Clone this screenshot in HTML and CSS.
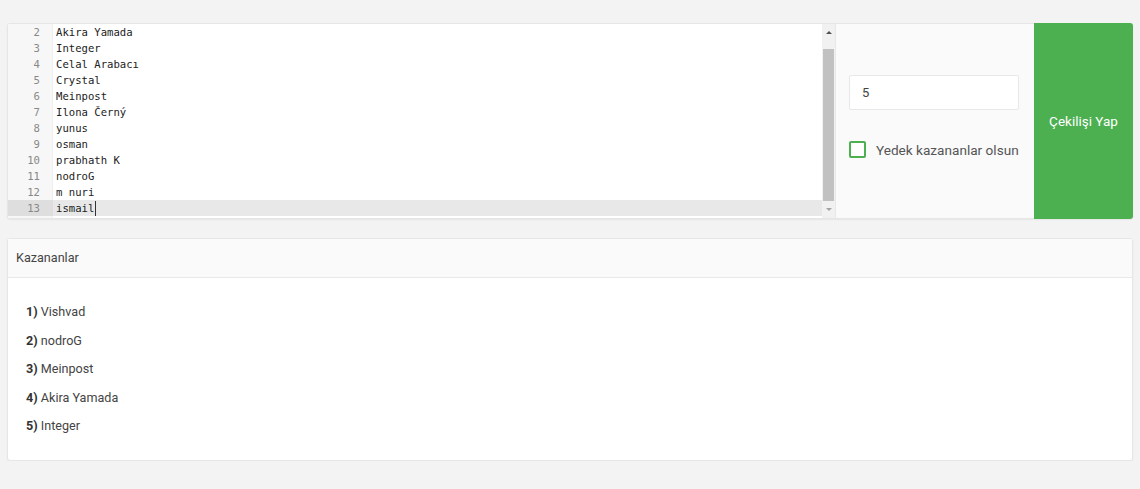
FILE: index.html
```html
<!DOCTYPE html>
<html lang="tr">
<head>
    <meta charset="UTF-8">
    <meta name="viewport" content="width=device-width, initial-scale=1.0">
    <title>Çekiliş</title>
    <link rel="stylesheet" href="styles.css">
</head>
<body>

<div class="page">
    <div class="card draw-card">
        <div class="editor">
            <div class="editor-lines">
                <div class="line"><span class="num">2</span><span class="code">Akira Yamada</span></div>
                <div class="line"><span class="num">3</span><span class="code">Integer</span></div>
                <div class="line"><span class="num">4</span><span class="code">Celal Arabacı</span></div>
                <div class="line"><span class="num">5</span><span class="code">Crystal</span></div>
                <div class="line"><span class="num">6</span><span class="code">Meinpost</span></div>
                <div class="line"><span class="num">7</span><span class="code">Ilona Černý</span></div>
                <div class="line"><span class="num">8</span><span class="code">yunus</span></div>
                <div class="line"><span class="num">9</span><span class="code">osman</span></div>
                <div class="line"><span class="num">10</span><span class="code">prabhath K</span></div>
                <div class="line"><span class="num">11</span><span class="code">nodroG</span></div>
                <div class="line"><span class="num">12</span><span class="code">m nuri</span></div>
                <div class="line active"><span class="num">13</span><span class="code">ismail<span class="caret"></span></span></div>
            </div>
            <div class="scrollbar">
                <div class="arrow up"></div>
                <div class="thumb"></div>
                <div class="arrow down"></div>
            </div>
        </div>

        <div class="options">
            <div class="count-input">5</div>
            <label class="check">
                <span class="box"></span>
                <span>Yedek kazananlar olsun</span>
            </label>
        </div>

        <div class="draw-button">Çekilişi Yap</div>
    </div>

    <div class="card winners">
        <div class="card-header">Kazananlar</div>
        <ul class="winner-list">
            <li><b>1)</b> Vishvad</li>
            <li><b>2)</b> nodroG</li>
            <li><b>3)</b> Meinpost</li>
            <li><b>4)</b> Akira Yamada</li>
            <li><b>5)</b> Integer</li>
        </ul>
    </div>
</div>

</body>
</html>
```

FILE: styles.css
```css
body {
    margin: 0;
    background-color: #f3f3f3;
    font-family: Roboto, "Liberation Sans", sans-serif;
    color: #444;
}
.page {
    padding: 23px 7px 0;
    display: flex;
    flex-direction: column;
    gap: 19px;
}
.card {
    background: #fff;
    border: 1px solid #e6e6e6;
    border-radius: 3px;
    box-shadow: 0 1px 2px rgba(0, 0, 0, 0.06);
}
.draw-card {
    display: flex;
    height: 194px;
}

/* Editor */
.editor {
    width: 827px;
    display: flex;
    border-right: 1px solid #e8e8e8;
    background: #fff;
}
.editor-lines {
    flex: 1;
    font-family: "DejaVu Sans Mono", monospace;
    font-size: 10.6px;
    color: #222;
    background: linear-gradient(to right, #f7f7f7 0, #f7f7f7 44px, #eeeeee 44px, #eeeeee 45px, #fff 45px);
}
.line {
    display: flex;
    height: 16px;
    line-height: 16px;
}
.num {
    width: 32px;
    text-align: right;
    color: #888;
    padding-right: 13px;
    flex-shrink: 0;
}
.code {
    padding-left: 3px;
    white-space: pre;
    display: flex;
    align-items: center;
}
.line.active {
    background: #e8e8e8;
}
.line.active .num {
    background: #dedede;
}
.caret {
    display: inline-block;
    width: 1px;
    height: 15px;
    background: #333;
    margin-left: 1px;
}
.scrollbar {
    width: 13px;
    background: #f1f1f1;
    display: flex;
    flex-direction: column;
}
.arrow {
    height: 17px;
    display: flex;
    justify-content: center;
    align-items: center;
}
.arrow::before {
    content: "";
    border-left: 3px solid transparent;
    border-right: 3px solid transparent;
}
.arrow.up::before {
    border-bottom: 3px solid #505050;
}
.arrow.down::before {
    border-top: 3px solid #a3a3a3;
}
.thumb {
    flex: 1;
    margin: 8px 1px 0;
    background: #c1c1c1;
}

/* Options */
.options {
    width: 170px;
    padding: 51px 15px 0 13px;
    background: #fafafa;
    display: flex;
    flex-direction: column;
    gap: 31px;
}
.count-input {
    height: 33px;
    line-height: 33px;
    padding-left: 12px;
    background: #fff;
    border: 1px solid #e8e8e8;
    border-radius: 2px;
    font-size: 13px;
    color: #444;
}
.check {
    display: flex;
    align-items: center;
    gap: 10px;
    font-size: 13.6px;
    color: #555;
    white-space: nowrap;
}
.box {
    flex-shrink: 0;
    width: 13px;
    height: 13px;
    border: 2px solid #4caf50;
    border-radius: 2px;
    background: #fff;
}

/* Button */
.draw-button {
    flex: 1;
    background: #4caf50;
    color: #fff;
    font-size: 13.5px;
    display: flex;
    justify-content: center;
    align-items: center;
    border-radius: 0 3px 3px 0;
    margin: -1px -1px -1px 0;
}

/* Winners */
.winners {
    height: 221px;
}
.card-header {
    height: 38px;
    line-height: 38px;
    padding-left: 8px;
    background: #fafafa;
    border-bottom: 1px solid #e8e8e8;
    font-size: 12.6px;
    color: #444;
}
.winner-list {
    list-style: none;
    margin: 0;
    padding: 20px 18px 0;
}
.winner-list li {
    height: 28.5px;
    line-height: 28px;
    font-size: 12.6px;
    color: #444;
}
.winner-list b {
    color: #333;
}
```
